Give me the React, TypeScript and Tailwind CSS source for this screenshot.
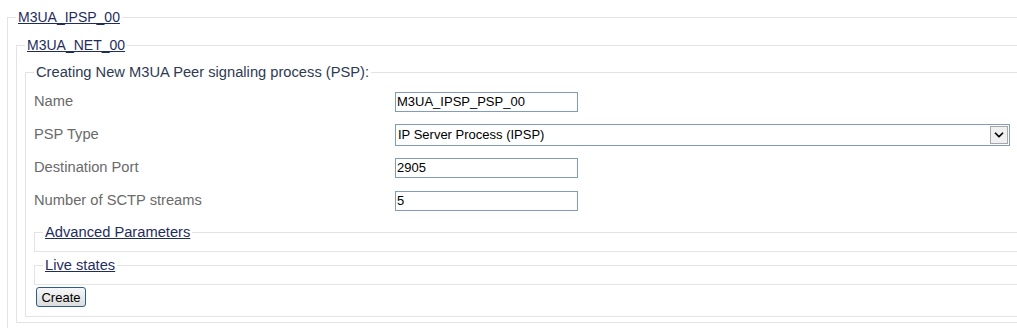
import { ChevronDown } from "lucide-react";

function Legend({ children, link = true, wide = false }: { children: React.ReactNode; link?: boolean; wide?: boolean }) {
  return (
    <legend className={`px-[2px] leading-[18px] ${wide ? "text-[14.7px]" : "text-[14px]"}`}>
      {link ? (
        <a href="#" className="text-[#1f2d5c] underline decoration-[#1f2d5c]">
          {children}
        </a>
      ) : (
        <span className="text-[#2e3a52]">{children}</span>
      )}
    </legend>
  );
}

function App() {
  const fields = [
    { label: "Name", value: "M3UA_IPSP_PSP_00" },
    { label: "PSP Type", value: "IP Server Process (IPSP)", select: true },
    { label: "Destination Port", value: "2905" },
    { label: "Number of SCTP streams", value: "5" },
  ];

  return (
    <div className="w-[1017px] h-[328px] overflow-hidden bg-white pl-[7px] pt-[8px] font-['Liberation_Sans',Arial,sans-serif] text-[14px]">
      <fieldset className="border border-r-0 border-[#e3e3e3] pl-2 pt-[10px] pb-[6px]">
        <Legend>M3UA_IPSP_00</Legend>

        <fieldset className="border border-r-0 border-[#e3e3e3] pl-2 pt-[9px] pb-[5px]">
          <Legend>M3UA_NET_00</Legend>

          <fieldset className="border border-r-0 border-[#e3e3e3] pl-2 pt-[4px] pb-[8px]">
            <Legend link={false} wide>
              Creating New M3UA Peer signaling process (PSP):
            </Legend>

            <div className="grid grid-cols-[361px_1fr]">
              {fields.map((f) => (
                <div key={f.label} className="contents">
                  <div className="h-[33px] flex items-center text-[14.7px] text-[#6a6a6a]">{f.label}</div>
                  <div className="h-[33px] flex items-center pr-[7px]">
                    {f.select ? (
                      <div className="w-full h-[22px] border border-[#7f9db9] flex items-center justify-between pl-[2px] pr-[1px] text-[13px] text-black">
                        <span>{f.value}</span>
                        <span className="w-[18px] h-[18px] border border-[#a8a8a8] bg-[#f0f0f0] flex items-center justify-center">
                          <ChevronDown size={14} strokeWidth={3} className="text-black" />
                        </span>
                      </div>
                    ) : (
                      <input
                        readOnly
                        value={f.value}
                        className="w-[183px] h-[20px] border border-[#7f9db9] px-[1px] text-[13px] text-black outline-none font-['Liberation_Sans',Arial,sans-serif]"
                      />
                    )}
                  </div>
                </div>
              ))}
            </div>

            <fieldset className="mt-[6px] border border-r-0 border-[#e3e3e3] pl-2 pb-[10px]">
              <Legend wide>Advanced Parameters</Legend>
            </fieldset>

            <fieldset className="mt-[4px] border border-r-0 border-[#e3e3e3] pl-2 pb-[10px]">
              <Legend wide>Live states</Legend>
            </fieldset>

            <button className="mt-[2px] ml-[2px] w-[50px] h-[20px] border border-[#2a5f8f] rounded-[3px] bg-gradient-to-b from-[#f7f7f7] to-[#dcdcdc] text-[13px] text-black leading-none">
              Create
            </button>
          </fieldset>
        </fieldset>
      </fieldset>
    </div>
  );
}

export default App;
